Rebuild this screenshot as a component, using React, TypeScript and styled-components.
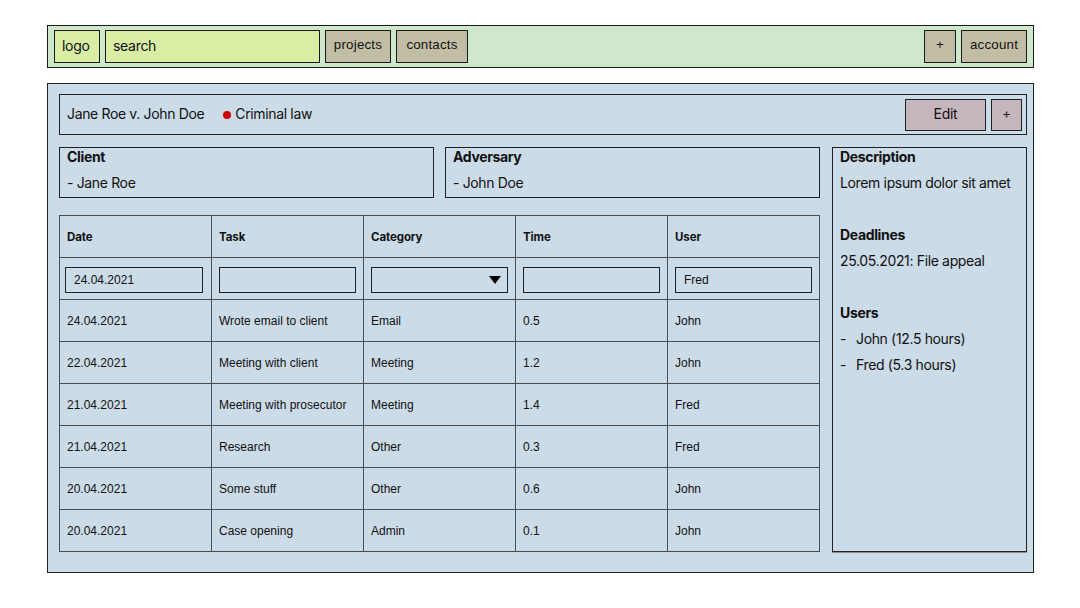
import React from "react";
import styled, { createGlobalStyle } from "styled-components";

const Global = createGlobalStyle`
  html, body { margin: 0; padding: 0; background: #ffffff; }
  body { font-family: Inter, "Noto Sans", sans-serif; color: #111111; font-size: 14px; letter-spacing: -0.35px; }
  * { box-sizing: border-box; }
`;

const Page = styled.div`
  width: 1080px;
  padding: 25px 0 0 47px;
`;

const TopBar = styled.header`
  width: 987px;
  height: 43px;
  border: 1px solid #1a1a1a;
  background: #cfe8cc;
  display: flex;
  align-items: center;
  gap: 5px;
  padding: 0 6px;
`;

const Field = styled.div<{ $w: number }>`
  width: ${(p) => p.$w}px;
  height: 33px;
  border: 1px solid #1a1a1a;
  background: #d9eda5;
  display: flex;
  align-items: center;
  padding: 0 0 3px 7px;
  font-family: Inter, sans-serif;
  font-size: 14px;
  letter-spacing: -0.3px;
  color: #111;
`;

const NavButton = styled.button<{ $w: number; $push?: boolean }>`
  width: ${(p) => p.$w}px;
  height: 33px;
  border: 1px solid #1a1a1a;
  background: #c2bea5;
  font-family: "Liberation Sans", Arial, sans-serif;
  font-size: 13.333px;
  letter-spacing: 0.2px;
  color: #111;
  padding: 0 0 4px;
  margin-left: ${(p) => (p.$push ? "auto" : "0")};
  display: flex;
  align-items: center;
  justify-content: center;
`;

const Panel = styled.main`
  width: 987px;
  height: 490px;
  margin-top: 15px;
  border: 1px solid #222;
  box-shadow: 0 1px 0 #8a8a8a;
  background: #ccdbe8;
  padding: 10px 6px 0 11px;
`;

const HeaderBar = styled.div`
  height: 41px;
  border: 1px solid #222;
  display: flex;
  align-items: center;
  padding: 0 4px 0 7px;
  font-size: 14px;
`;

const CaseTitle = styled.span`
  margin-right: 19px;
  margin-top: -3px;
`;

const CaseKind = styled.span`
  margin-top: -3px;
`;

const Dot = styled.span`
  width: 8px;
  height: 8px;
  border-radius: 50%;
  background: #cc0000;
  margin-right: 4px;
  margin-top: 0;
`;

const ActionButton = styled.button<{ $w: number; $push?: boolean }>`
  width: ${(p) => p.$w}px;
  height: 32px;
  margin-left: ${(p) => (p.$push ? "auto" : "5px")};
  margin-top: 1px;
  border: 1px solid #222;
  background: #c5b5bd;
  font-family: Inter, sans-serif;
  font-size: ${(p) => (p.$w > 40 ? "14px" : "13px")};
  letter-spacing: -0.3px;
  color: #111;
  padding: 0 0 4px;
`;

const Body = styled.div`
  display: flex;
  gap: 12px;
  margin-top: 12px;
`;

const LeftCol = styled.div`
  width: 761px;
  display: flex;
  flex-direction: column;
`;

const CardRow = styled.div`
  display: flex;
  gap: 11px;
`;

const Card = styled.section`
  width: 375px;
  height: 51px;
  border: 1px solid #222;
  padding: 0 7px 5px;
`;

const Title = styled.div<{ $gap?: number }>`
  font-weight: 700;
  line-height: 18px;
  margin-top: ${(p) => p.$gap ?? 0}px;
`;

const Line = styled.div`
  line-height: 18px;
  margin-top: 8px;
  display: flex;
  white-space: nowrap;
`;

const Dash = styled.span`
  width: 16px;
`;

const Table = styled.div`
  margin-top: 17px;
  display: grid;
  grid-template-columns: repeat(5, 152px);
  grid-auto-rows: 42px;
  border-top: 1px solid #4d4d4d;
  border-left: 1px solid #4d4d4d;
  width: 761px;
  letter-spacing: 0;
`;

const Cell = styled.div<{ $head?: boolean }>`
  border-right: 1px solid #4d4d4d;
  border-bottom: 1px solid #4d4d4d;
  display: flex;
  align-items: center;
  padding-left: 7px;
  padding-top: 1px;
  font-family: ${(p) => (p.$head ? "Inter, sans-serif" : '"Liberation Sans", Arial, sans-serif')};
  font-weight: ${(p) => (p.$head ? 700 : 400)};
  font-size: ${(p) => (p.$head ? "11.5px" : "12px")};
  letter-spacing: ${(p) => (p.$head ? "-0.1px" : "0")};
  color: #111;
`;

const FilterCell = styled.div<{ $first?: boolean }>`
  border-right: 1px solid #4d4d4d;
  border-bottom: 1px solid #4d4d4d;
  padding: 9px 0 0 ${(p) => (p.$first ? 5 : 7)}px;
`;

const FilterInput = styled.div<{ $w: number }>`
  width: ${(p) => p.$w}px;
  height: 26px;
  border: 1px solid #222;
  display: flex;
  align-items: center;
  justify-content: space-between;
  padding: 0 6px 0 8px;
  font-family: "Liberation Sans", Arial, sans-serif;
  font-size: 12px;
  color: #111;
`;

const Side = styled.aside`
  width: 195px;
  height: 405px;
  border: 1px solid #222;
  box-shadow: 0 1px 0 #8a8a8a;
  padding: 0 7px;
`;

const rows = [
  ["24.04.2021", "Wrote email to client", "Email", "0.5", "John"],
  ["22.04.2021", "Meeting with client", "Meeting", "1.2", "John"],
  ["21.04.2021", "Meeting with prosecutor", "Meeting", "1.4", "Fred"],
  ["21.04.2021", "Research", "Other", "0.3", "Fred"],
  ["20.04.2021", "Some stuff", "Other", "0.6", "John"],
  ["20.04.2021", "Case opening", "Admin", "0.1", "John"],
];

const heads = ["Date", "Task", "Category", "Time", "User"];
const filters = ["24.04.2021", "", "select", "", "Fred"];

export default function App() {
  return (
    <Page>
      <Global />
      <TopBar>
        <Field $w={46}>logo</Field>
        <Field $w={215}>search</Field>
        <NavButton $w={66}>projects</NavButton>
        <NavButton $w={72}>contacts</NavButton>
        <NavButton $w={32} $push>+</NavButton>
        <NavButton $w={66}>account</NavButton>
      </TopBar>
      <Panel>
        <HeaderBar>
          <CaseTitle>Jane Roe v. John Doe</CaseTitle>
          <Dot />
          <CaseKind>Criminal law</CaseKind>
          <ActionButton $w={81} $push>Edit</ActionButton>
          <ActionButton $w={31}>+</ActionButton>
        </HeaderBar>
        <Body>
          <LeftCol>
            <CardRow>
              <Card>
                <Title>Client</Title>
                <Line>- Jane Roe</Line>
              </Card>
              <Card>
                <Title>Adversary</Title>
                <Line>- John Doe</Line>
              </Card>
            </CardRow>
            <Table>
              {heads.map((h) => (
                <Cell key={h} $head>{h}</Cell>
              ))}
              {filters.map((f, i) => (
                <FilterCell key={i} $first={i === 0}>
                  <FilterInput $w={i === 0 ? 138 : 137}>
                    <span>{f === "select" ? "" : f}</span>
                    {f === "select" && (
                      <svg width="12" height="8" viewBox="0 0 12 8">
                        <polygon points="0,0 12,0 6,8" fill="#000" />
                      </svg>
                    )}
                  </FilterInput>
                </FilterCell>
              ))}
              {rows.map((r, ri) =>
                r.map((c, ci) => <Cell key={`${ri}-${ci}`}>{c}</Cell>)
              )}
            </Table>
          </LeftCol>
          <Side>
            <Title>Description</Title>
            <Line>Lorem ipsum dolor sit amet</Line>
            <Title $gap={34}>Deadlines</Title>
            <Line>25.05.2021: File appeal</Line>
            <Title $gap={34}>Users</Title>
            <Line>
              <Dash>-</Dash>John (12.5 hours)
            </Line>
            <Line>
              <Dash>-</Dash>Fred (5.3 hours)
            </Line>
          </Side>
        </Body>
      </Panel>
    </Page>
  );
}
